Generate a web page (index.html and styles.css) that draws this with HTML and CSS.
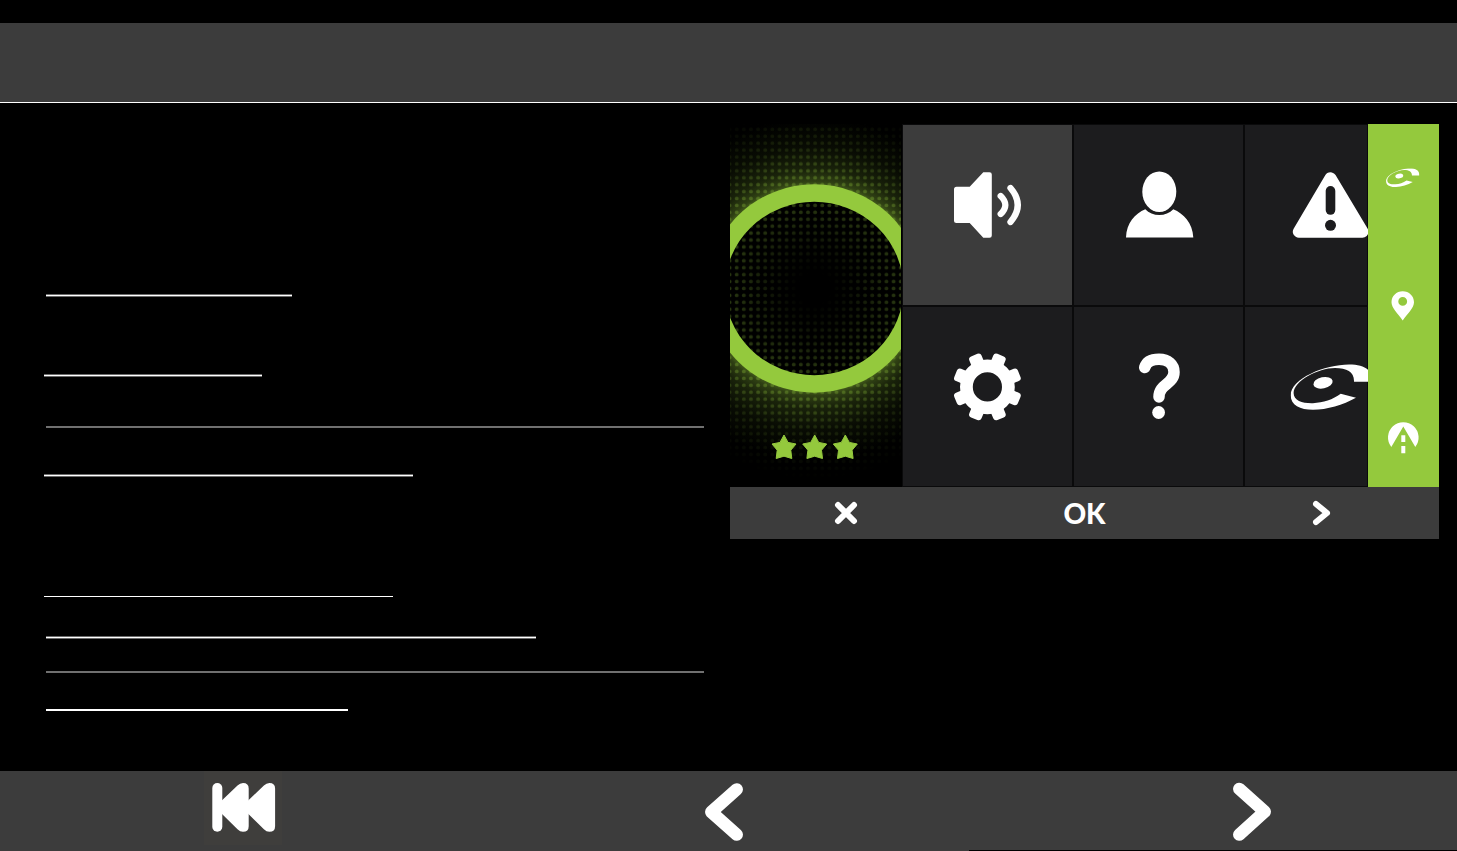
FILE: index.html
```html
<!DOCTYPE html>
<html lang="en">
<head>
<meta charset="utf-8">
<meta name="viewport" content="width=device-width, initial-scale=1">
<title>Main menu</title>
<link rel="stylesheet" href="styles.css">
</head>
<body>
<header class="header"></header>
<main class="main">
  <section class="outline">
    <hr class="line soft" style="width:37.3%">
    <hr class="line soft second" style="width:33.1%">
    <hr class="rule">
    <hr class="line soft third" style="width:55.9%">
    <hr class="line fine" style="width:52.9%">
    <hr class="line soft fifth" style="width:74.2%">
    <hr class="rule lower">
    <hr class="line bold" style="width:45.8%">
  </section>
  <section class="device" aria-label="Device menu">
    <div class="screen">
      <svg class="dial" viewBox="730 124 172 363" aria-hidden="true">
        <defs>
          <pattern id="dots" x="733.1" y="125.9" width="7.13" height="6.92" patternUnits="userSpaceOnUse">
            <circle cx="3.6" cy="3.4" r="1.9" fill="#94c93d"/>
          </pattern>
          <radialGradient id="halo" gradientUnits="userSpaceOnUse" cx="0" cy="0" r="186" gradientTransform="translate(814.2 288.5) scale(1.04 1)">
            <stop offset="0.54" stop-color="#94c93d" stop-opacity="0.55"/>
            <stop offset="0.575" stop-color="#94c93d" stop-opacity="0.32"/>
            <stop offset="0.64" stop-color="#94c93d" stop-opacity="0.17"/>
            <stop offset="0.76" stop-color="#94c93d" stop-opacity="0.06"/>
            <stop offset="0.92" stop-color="#94c93d" stop-opacity="0"/>
          </radialGradient>
          <radialGradient id="fade" gradientUnits="userSpaceOnUse" cx="814.7" cy="288.5" r="200">
            <stop offset="0.08" stop-color="#fff" stop-opacity="0"/>
            <stop offset="0.42" stop-color="#fff" stop-opacity="0.27"/>
            <stop offset="0.55" stop-color="#fff" stop-opacity="0.32"/>
            <stop offset="0.7" stop-color="#fff" stop-opacity="0.14"/>
            <stop offset="0.95" stop-color="#fff" stop-opacity="0"/>
          </radialGradient>
          <mask id="dotmask" maskUnits="userSpaceOnUse" x="730" y="124" width="172" height="363">
            <rect x="730" y="124" width="172" height="363" fill="url(#fade)"/>
          </mask>
        </defs>
        <rect x="730" y="124" width="171" height="363" fill="url(#halo)"/>
        <ellipse cx="814.2" cy="288.5" rx="98" ry="95.4" fill="#000"/>
        <rect x="730" y="124" width="171" height="363" fill="url(#dots)" mask="url(#dotmask)"/>
        <ellipse cx="814.2" cy="288.5" rx="98" ry="95.4" fill="none" stroke="#94c93d" stroke-width="17.5"/>
        <rect x="901" y="124" width="1" height="363" fill="#000"/>
        <g fill="#94c93d" stroke="#94c93d" stroke-width="1" stroke-linejoin="round">
          <path id="star" d="M784 435L788 442.4L796 444L790.8 450.2L791.8 458.5L784 456.2L776.2 458.5L777.2 450.2L772 444L780 442.4Z"/>
          <use href="#star" x="30.7"/>
          <use href="#star" x="61.3"/>
        </g>
      </svg>
      <button class="tile selected" aria-label="Sound">
        <svg viewBox="902 124 171 181.5">
          <path fill="#fff" d="M956.5 186.7H969.7L983.3 172.3H989.5Q991.8 172.3 991.8 174.6V235.4Q991.8 237.7 989.5 237.7H983.3L969.7 223H956.5Q954 223 954 220.5V189.2Q954 186.7 956.5 186.7Z"/>
          <path d="M1000.7 196Q1010 205 1000.7 214M1010.5 188Q1025 205 1010.5 222" fill="none" stroke="#fff" stroke-width="6.3" stroke-linecap="round"/>
        </svg>
      </button>
      <button class="tile" aria-label="Profile">
        <svg viewBox="1073 124 171 181.5" fill="#fff">
          <ellipse cx="1159.3" cy="191.7" rx="17" ry="20.3"/>
          <path d="M1126 237.4C1126.5 223 1135 213.5 1145.3 209.3C1152 217 1166.5 217 1173.3 209.3C1183.5 213.5 1192.7 223 1193.3 237.4Z"/>
        </svg>
      </button>
      <button class="tile" aria-label="Alerts">
        <svg viewBox="1244 124 124 181.5">
          <path d="M1330.4 178.2L1298.8 231.7H1362.4Z" fill="#fff" stroke="#fff" stroke-width="12" stroke-linejoin="round"/>
          <path d="M1330.5 190.8V210" stroke="#1c1c1e" stroke-width="9.6" stroke-linecap="round"/>
          <circle cx="1330.5" cy="225.3" r="5.5" fill="#1c1c1e"/>
        </svg>
      </button>
      <button class="tile" aria-label="Settings">
        <svg viewBox="902 305.5 171 181.5">
          <g transform="translate(987.4 386.4)" fill="#fff">
            <circle r="21" fill="none" stroke="#fff" stroke-width="12.8"/>
            <g id="teeth">
              <rect x="-6.6" y="-34.4" width="13.2" height="16" rx="3.2" transform="rotate(22.5)"/>
              <rect x="-6.6" y="-34.4" width="13.2" height="16" rx="3.2" transform="rotate(67.5)"/>
            </g>
            <use href="#teeth" transform="rotate(90)"/>
            <use href="#teeth" transform="rotate(180)"/>
            <use href="#teeth" transform="rotate(270)"/>
          </g>
        </svg>
      </button>
      <button class="tile" aria-label="Help">
        <svg viewBox="1073 305.5 171 181.5">
          <path d="M1144.7 367C1146.5 361 1152 358.7 1159 358.7C1168 358.7 1174 364 1174 371.5C1174 384 1159 383 1159 396.5" fill="none" stroke="#fff" stroke-width="11.5" stroke-linecap="round"/>
          <circle cx="1158.6" cy="412" r="6.4" fill="#fff"/>
        </svg>
      </button>
      <button class="tile" aria-label="Community">
        <svg viewBox="1244 305.5 124 181.5">
          <symbol id="swirl" viewBox="1290.5 363.5 82 46">
            <path fill="#fff" d="M1372 381.3H1354C1354.5 371.5 1347 367.4 1335 367.4C1318 367.6 1294 380 1293.6 392.5C1293.6 400.5 1303 403 1313 402.7C1323 402.3 1333 399 1340.7 393.3L1356 397.3C1343 404.5 1327 409.3 1313 409.3C1300 409.3 1290.7 404.5 1290.7 395C1290.7 378 1325 364 1349 364C1364 364 1373 369 1372 381.3Z"/>
            <ellipse cx="1323" cy="382.3" rx="9.8" ry="5.6" fill="#fff" transform="rotate(-12 1323 382.3)"/>
          </symbol>
          <use href="#swirl" x="1290.5" y="363.5" width="82" height="46"/>
        </svg>
      </button>
      <nav class="side" aria-label="Shortcuts">
        <button aria-label="Community view">
          <svg viewBox="1368 124 71 121"><use href="#swirl" x="1386" y="168.3" width="33.5" height="18.8"/></svg>
        </button>
        <button aria-label="Location">
          <svg viewBox="1368 245 71 121"><path fill="#fff" fill-rule="evenodd" d="M1402.7 291.3C1409 291.3 1414 296 1414 302.3C1414 308 1408 313 1402.7 320.5C1397.5 313 1391.5 308 1391.5 302.3C1391.5 296 1396.5 291.3 1402.7 291.3ZM1402.7 297A4.4 4.4 0 1 0 1402.7 305.8A4.4 4.4 0 1 0 1402.7 297Z"/></svg>
        </button>
        <button aria-label="Road">
          <svg viewBox="1368 366 71 121" fill="#fff"><path d="M1391.3 447A15.3 15.3 0 1 1 1415.3 447L1403.3 426.5Z"/><path d="M1401.3 435.3H1405.3V442H1401.3ZM1401.3 446H1405.3V453.3H1401.3Z"/></svg>
        </button>
      </nav>
    </div>
    <div class="actions">
      <button aria-label="Close"><svg width="28" height="24" viewBox="834 501 28 24"><path d="M838 505L854 521M854 505L838 521"/></svg></button>
      <button>OK</button>
      <button aria-label="Next tiles"><svg width="24" height="26" viewBox="1309 500 24 26"><path d="M1316 504L1327 513L1316 522"/></svg></button>
    </div>
  </section>
</main>
<footer class="footer">
  <button class="first" aria-label="First page">
    <svg width="78" height="74" viewBox="204 771 78 74" fill="#fff">
      <rect x="212.3" y="783" width="10" height="48.7" rx="5"/>
      <path id="back" d="M221 801.3L237.5 785.5Q240 783 243 783Q248.7 783 248.7 788.5V826.2Q248.7 831.7 243 831.7Q240 831.7 237.5 829.2L221 813Z"/>
      <use href="#back" x="26.4"/>
    </svg>
  </button>
  <button aria-label="Previous page"><svg width="38" height="74" viewBox="705 771 38 74"><path class="chevron" d="M736.7 789.4L711.3 812L736.7 834.6"/></svg></button>
  <button aria-label="Next page"><svg width="38" height="74" viewBox="1233 771 38 74"><path class="chevron" d="M1239.3 788.9L1264.7 811.7L1239.3 834.6"/></svg></button>
</footer>
</body>
</html>
```
FILE: styles.css
```css
* {
  box-sizing: border-box;
}

body {
  display: flex;
  flex-direction: column;
  min-height: 100vh;
  margin: 0;
  padding-top: 23px;
  background: #000;
  color: #fff;
  font-family: Lato, "Open Sans", sans-serif;
}

button {
  display: block;
  margin: 0;
  padding: 0;
  border: 0;
  background: none;
  color: inherit;
  font: inherit;
  cursor: pointer;
}

svg {
  display: block;
}

.header {
  height: 80px;
  border-bottom: 1px solid #fff;
  background: #3c3c3c;
}

.main {
  display: grid;
  flex: 1;
  grid-template-columns: 660fr 709fr;
  align-items: start;
  gap: 26px;
  padding: 0 18px 0 44px;
}

/* Section lines */
.outline {
  padding-top: 191px;
}

.outline hr {
  margin: 0 0 0 2px;
  border: 0;
}

.line {
  height: 1px;
  background: #fff;
}

.outline .soft {
  height: 3px;
  border: solid #6a6a6a;
  border-width: 1px 0;
}

.outline .second {
  margin-top: 77px;
  margin-left: 0;
}

.rule {
  height: 2px;
  background: #707070;
}

.outline .rule {
  margin-top: 49px;
}

.outline .third {
  margin-top: 46px;
  margin-left: 0;
}

.outline .fine {
  margin-top: 119px;
  margin-left: 0;
}

.outline .fifth {
  margin-top: 39px;
}

.outline .lower {
  margin-top: 32px;
}

.outline .bold {
  height: 2px;
  margin-top: 36px;
}

/* Device */
.device {
  margin-top: 21px;
}

.screen {
  display: grid;
  grid-template-columns: 172fr 171fr 171fr 124fr 71fr;
}

.screen svg {
  width: 100%;
}

.dial {
  grid-row: span 2;
}

.tile {
  background: #1c1c1e;
  box-shadow: inset 0 0 0 1px #0a0a0b;
}

.selected {
  background: #3c3c3c;
}

.side {
  display: grid;
  grid-row: 1 / span 2;
  grid-column: 5;
  background: #94c93d;
}

.actions {
  display: grid;
  grid-template-columns: repeat(3, 1fr);
  height: 52px;
  background: #3c3c3c;
}

.actions button {
  display: grid;
  place-items: center;
  font-size: 28px;
  font-weight: 900;
  line-height: 32px;
}

.actions path {
  fill: none;
  stroke: #fff;
  stroke-width: 6;
  stroke-linecap: round;
  stroke-linejoin: round;
}

/* Page controls */
.footer {
  display: grid;
  grid-template-columns: 204fr 501fr 528fr 224fr;
  align-items: start;
  justify-items: start;
  height: 80px;
  background: #3c3c3c linear-gradient(#000, #000) right bottom / 33.5% 1px no-repeat;
}

.first {
  grid-column: 2;
  background: #3f3e3c;
}

.chevron {
  fill: none;
  stroke: #fff;
  stroke-width: 12.5;
  stroke-linecap: round;
  stroke-linejoin: round;
}
```
